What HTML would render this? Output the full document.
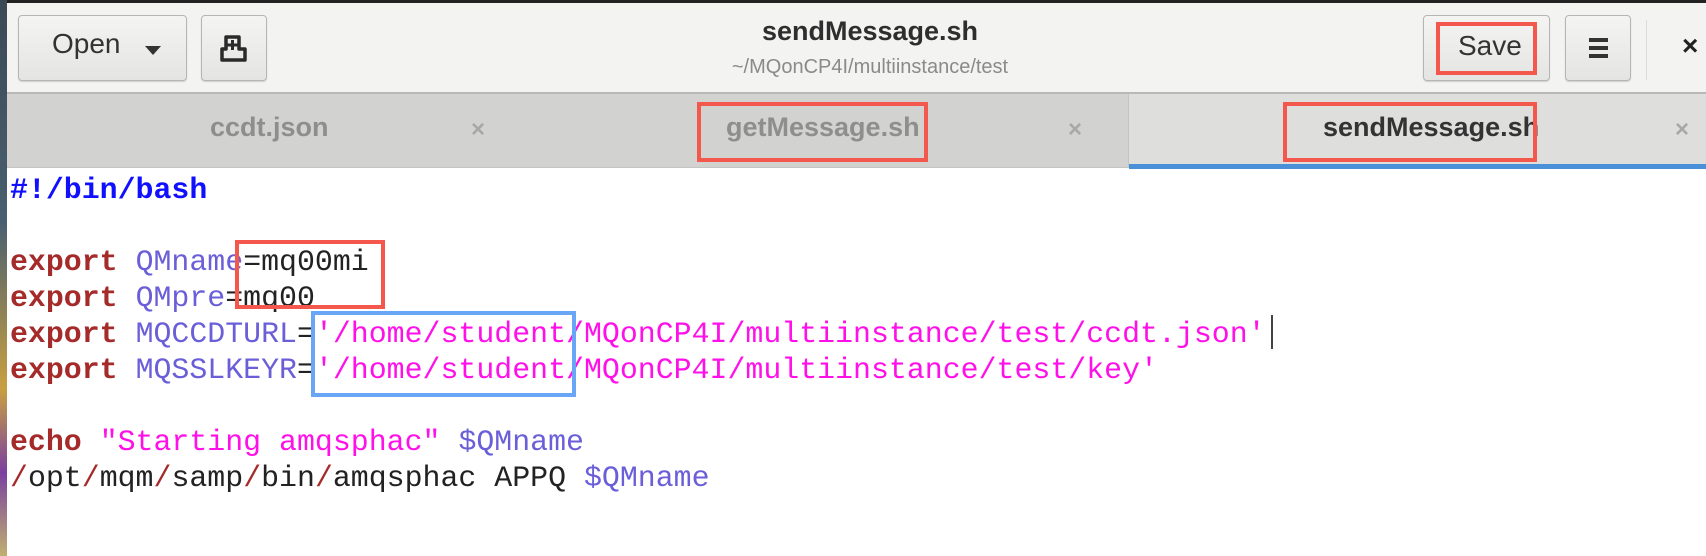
<!DOCTYPE html>
<html><head><meta charset="utf-8"><style>
*{margin:0;padding:0;box-sizing:border-box}
body{width:1706px;height:556px;overflow:hidden;background:#fff;position:relative;font-family:"Liberation Sans",sans-serif}
.abs{position:absolute}
#strip{left:0;top:0;width:7px;height:556px;background:linear-gradient(#3a4a55,#4a6070 40%,#c8a040 70%,#7a40a0 85%,#c0b070)}
#topline{left:0;top:0;width:1706px;height:3px;background:#222}
#header{left:7px;top:3px;width:1699px;height:91px;background:#f3f3f2;border-bottom:2px solid #b8b8b6}
.btn{background:linear-gradient(#f4f4f3,#e4e4e2);border:1px solid #b5b5b3;border-radius:4px;box-shadow:0 1px 1px rgba(0,0,0,.15)}
#tabs{left:7px;top:94px;width:1699px;height:74px;background:#d2d2d0;border-bottom:1px solid #c4c4c2}
.tab{position:absolute;top:0;height:74px;font-size:27px;color:#8e8e8c;font-weight:bold}
.close{position:absolute;color:#a8a8a6;font-size:24px;top:22px}
pre{position:absolute;left:10px;top:172px;font-family:"Liberation Mono","DejaVu Sans Mono",monospace;font-size:29.9px;line-height:36px;color:#222}
.k{color:#a52a2a;font-weight:bold}.v{color:#6a5fd8}.s{color:#ff10e8}.c{color:#1010ff;font-weight:bold}.sl{color:#a52a2a}
.red{border:4px solid #f4584c}.blue{border:4px solid #6aa6f8}
</style></head><body>
<div class="abs" id="header"></div>
<div class="abs" id="topline"></div>
<div class="abs btn" style="left:18px;top:15px;width:169px;height:66px"></div>
<div class="abs" style="left:52px;top:28px;font-size:28px;color:#333">Open</div>
<div class="abs" style="left:145px;top:46px;width:0;height:0;border-left:8px solid transparent;border-right:8px solid transparent;border-top:9px solid #333"></div>
<div class="abs btn" style="left:201px;top:15px;width:66px;height:66px"></div>
<svg class="abs" style="left:218px;top:34px" width="32" height="30" viewBox="0 0 32 30"><path d="M8 3h13v12h6v11H4V15h4z" fill="none" stroke="#2a2a2a" stroke-width="3.5" stroke-linejoin="round"/><path d="M14.5 6v10M9.5 11h10" stroke="#2a2a2a" stroke-width="3"/></svg>
<div class="abs" style="left:0;width:1740px;top:16px;text-align:center;font-size:27px;font-weight:bold;color:#2e2e2e">sendMessage.sh</div>
<div class="abs" style="left:0;width:1740px;top:56px;text-align:center;font-size:20px;color:#8a8a88">~/MQonCP4I/multiinstance/test</div>
<div class="abs btn" style="left:1423px;top:15px;width:127px;height:66px"></div>
<div class="abs red" style="left:1436px;top:22px;width:101px;height:53px"></div>
<div class="abs" style="left:1458px;top:30px;font-size:28px;color:#333">Save</div>
<div class="abs btn" style="left:1565px;top:15px;width:66px;height:66px"></div>
<div class="abs" style="left:1589px;top:38px;width:19px;height:4px;background:#333;box-shadow:0 8px 0 #333,0 16px 0 #333"></div>
<div class="abs" style="left:1646px;top:20px;width:1px;height:60px;background:#dcdcda"></div>
<div class="abs" style="left:1682px;top:30px;font-size:28px;font-weight:bold;color:#222">×</div>
<div class="abs" id="tabs">
 <div class="tab" style="left:0;width:561px"><span style="position:absolute;left:203px;top:18px">ccdt.json</span><span class="close" style="left:464px">×</span></div>
 <div class="tab" style="left:561px;width:560px"><span style="position:absolute;left:158px;top:18px">getMessage.sh</span><span class="close" style="left:500px">×</span></div>
 <div class="tab" style="left:1121px;width:578px;background:#dededc;color:#333;border-left:1px solid #c4c4c2"><span style="position:absolute;left:194px;top:18px">sendMessage.sh</span><span class="close" style="left:546px">×</span>
 <div style="position:absolute;left:0;bottom:-1px;width:578px;height:5px;background:#4a90d9"></div></div>
</div>
<div class="abs red" style="left:697px;top:102px;width:231px;height:60px"></div>
<div class="abs red" style="left:1283px;top:102px;width:254px;height:60px"></div>
<pre><span class="c">#!/bin/bash</span>

<span class="k">export</span> <span class="v">QMname</span>=mq00mi
<span class="k">export</span> <span class="v">QMpre</span>=mq00
<span class="k">export</span> <span class="v">MQCCDTURL</span>=<span class="s">'/home/student/MQonCP4I/multiinstance/test/ccdt.json'</span>
<span class="k">export</span> <span class="v">MQSSLKEYR</span>=<span class="s">'/home/student/MQonCP4I/multiinstance/test/key'</span>

<span class="k">echo</span> <span class="s">"Starting amqsphac"</span> <span class="v">$QMname</span>
<span class="sl">/</span>opt<span class="sl">/</span>mqm<span class="sl">/</span>samp<span class="sl">/</span>bin<span class="sl">/</span>amqsphac APPQ <span class="v">$QMname</span></pre>
<div class="abs" style="left:1271px;top:315px;width:2px;height:34px;background:#444"></div>
<div class="abs red" style="left:235px;top:240px;width:150px;height:69px"></div>
<div class="abs blue" style="left:311px;top:311px;width:265px;height:86px"></div>
<div class="abs" id="strip"></div>
</body></html>
